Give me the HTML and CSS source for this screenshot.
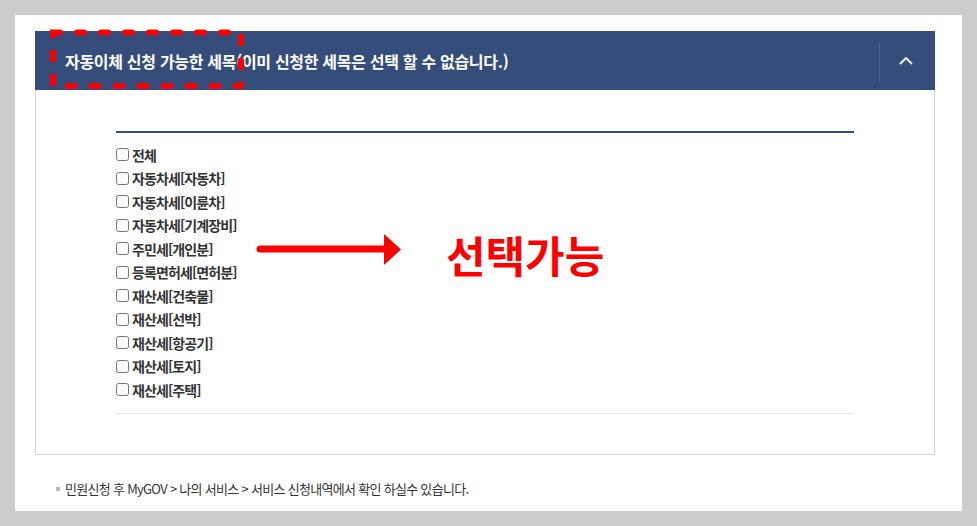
FILE: index.html
```html
<!DOCTYPE html>
<html lang="ko">
<head>
  <meta charset="UTF-8" />
  <meta name="viewport" content="width=device-width, initial-scale=1.0">
  <title>자동이체 신청 세목 선택</title>
  <link rel="stylesheet" href="styles.css">
</head>
<body>

  <div class="page">
    <div class="panel">
      <div class="panel-head">
        <h2 class="panel-title">자동이체 신청 가능한 세목(이미 신청한 세목은 선택 할 수 없습니다.)</h2>
        <button class="toggle" type="button" aria-label="접기">
          <svg width="14" height="8" viewBox="0 0 14 8"><polyline points="1,7 7,1 13,7" fill="none" stroke="#fff" stroke-width="1.8"/></svg>
        </button>
      </div>
      <div class="panel-body">
        <ul class="tax-list">
          <li><label><input type="checkbox"> 전체</label></li>
          <li><label><input type="checkbox"> 자동차세[자동차]</label></li>
          <li><label><input type="checkbox"> 자동차세[이륜차]</label></li>
          <li><label><input type="checkbox"> 자동차세[기계장비]</label></li>
          <li><label><input type="checkbox"> 주민세[개인분]</label></li>
          <li><label><input type="checkbox"> 등록면허세[면허분]</label></li>
          <li><label><input type="checkbox"> 재산세[건축물]</label></li>
          <li><label><input type="checkbox"> 재산세[선박]</label></li>
          <li><label><input type="checkbox"> 재산세[항공기]</label></li>
          <li><label><input type="checkbox"> 재산세[토지]</label></li>
          <li><label><input type="checkbox"> 재산세[주택]</label></li>
        </ul>
      </div>
    </div>

    <p class="note"><span class="bullet"></span>민원신청 후 MyGOV &gt; 나의 서비스 &gt; 서비스 신청내역에서 확인 하실수 있습니다.</p>

    <!-- 안내용 표시 (빨간 점선, 화살표) -->
    <svg class="mark-box" width="198" height="64" viewBox="0 0 198 64">
      <rect x="5" y="4.5" width="188" height="53.5" fill="none" stroke="#ff0000" stroke-width="6" stroke-linecap="round" stroke-dasharray="7 17"/>
    </svg>
    <svg class="mark-arrow" width="146" height="38" viewBox="0 0 146 38">
      <line x1="4" y1="18" x2="132" y2="18" stroke="#ff0000" stroke-width="7" stroke-linecap="round"/>
      <polygon points="128,3 145,18.5 128,34" fill="#ff0000"/>
    </svg>
    <div class="mark-text">선택가능</div>
  </div>

</body>
</html>
```

FILE: styles.css
```css
* {
  margin: 0;
  padding: 0;
  box-sizing: border-box;
}

body {
  background: #cccccc;
  padding: 15px;
  font-family: "Noto Sans CJK KR", "Noto Sans", sans-serif;
  color: #333;
}

.page {
  position: relative;
  background: #fff;
  height: 496px;
  padding: 16px 27px 0 20px;
}

/* 패널 헤더 */
.panel-head {
  display: flex;
  align-items: center;
  height: 59px;
  background: #344d7a;
  padding-left: 30px;
}

.panel-title {
  flex: 1;
  color: #fff;
  font-size: 16px;
  font-weight: bold;
  letter-spacing: -0.3px;
}

.toggle {
  width: 52px;
  height: 40px;
  margin-right: 4px;
  border: none;
  border-left: 1px solid #4a6190;
  background: transparent;
  display: flex;
  align-items: center;
  justify-content: center;
  cursor: pointer;
}

.panel-body {
  border: 1px solid #d5d5d5;
  border-top: none;
  padding: 41px 80px 40px;
}

.tax-list {
  list-style: none;
  border-top: 2px solid #344d7a;
  border-bottom: 1px solid #e5e5e5;
  padding: 10px 0 11px;
}

.tax-list li {
  height: 23.5px;
  display: flex;
  align-items: center;
}

.tax-list label {
  display: flex;
  align-items: center;
  font-size: 14px;
  font-weight: bold;
  letter-spacing: -0.9px;
  color: #333;
}

.tax-list input {
  width: 13px;
  height: 13px;
  margin: 0 3px 0 0;
}

/* 하단 안내 */
.note {
  margin-top: 24px;
  padding-left: 21px;
  font-size: 13px;
  line-height: 20px;
  letter-spacing: -0.7px;
  color: #333;
  display: flex;
  align-items: center;
}

.bullet {
  width: 4px;
  height: 4px;
  background: #bbb;
  margin-right: 5px;
}

/* 빨간 안내 표시 */
.mark-box {
  position: absolute;
  left: 33px;
  top: 13px;
}

.mark-arrow {
  position: absolute;
  left: 241px;
  top: 216px;
}

.mark-text {
  position: absolute;
  left: 431px;
  top: 213px;
  font-size: 43px;
  font-weight: bold;
  line-height: 52px;
  color: #ff0000;
}
```
